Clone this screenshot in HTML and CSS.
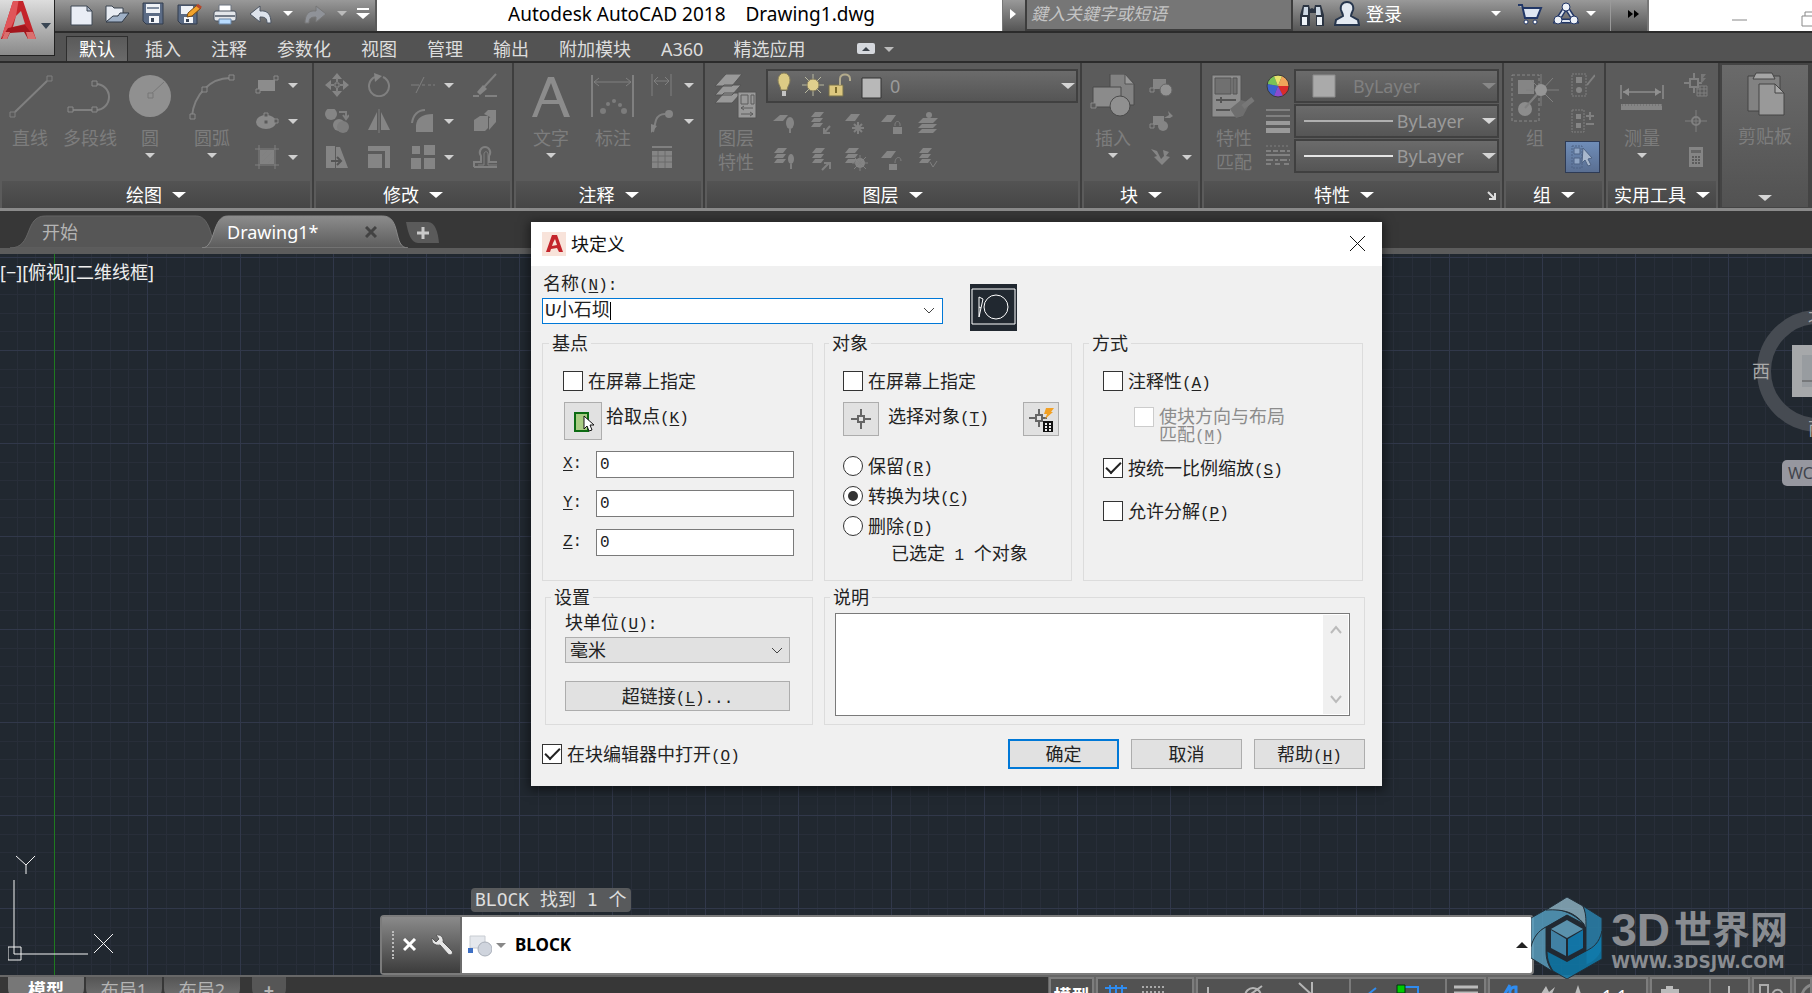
FILE: index.html
```html
<!DOCTYPE html>
<html lang="zh-CN">
<head>
<meta charset="utf-8">
<title>Autodesk AutoCAD 2018 Drawing1.dwg</title>
<link rel="stylesheet" href="styles.css">
</head>
<body>
<div class="app">
<header class="titlebar">
  <nav class="qat">
    <button class="tb" aria-label="新建"><svg width="26" height="24"><path d="M3 4h16l5 5v14H3z" fill="#e9edf5" stroke="#3f4855"/><path d="M19 4v5h5z" fill="#a9b4c6" stroke="#3f4855"/></svg></button>
    <button class="tb" aria-label="打开"><svg width="26" height="24"><path d="M2 19V4h6l2 2h9v5" fill="#e8ecf3" stroke="#39424f"/><path d="M2 20l7-6h5l2-3h9l-7 9z" fill="#9fb0c6" stroke="#2f3947"/></svg></button>
    <button class="tb" aria-label="保存"><svg width="26" height="24"><path d="M3 1h20v21H6l-3-3z" fill="#5b6b85" stroke="#333c4c"/><path d="M6 2h14v9H6z" fill="#eef1f6"/><path d="M7 6h12" stroke="#7f8c9f" stroke-width="2"/><path d="M9 14h10v7H9z" fill="#f4f6fa"/><path d="M11 16h3v4h-3z" fill="#3b4658"/></svg></button>
    <button class="tb" aria-label="另存为"><svg width="26" height="24"><path d="M2 3h19v19H5l-3-3z" fill="#5b6b85" stroke="#333c4c"/><path d="M5 4h12v8H5z" fill="#eef1f6"/><path d="M8 15h9v6H8z" fill="#f4f6fa"/><path d="M10 17h3v3h-3z" fill="#3b4658"/><path d="M11 15l1-4 9-8 4 3-9 8z" fill="#f2a32b" stroke="#7a4a13"/><path d="M21 3l4 3" stroke="#b5472c" stroke-width="3"/></svg></button>
    <button class="tb" aria-label="打印"><svg width="26" height="24"><path d="M7 3h12v7H7z" fill="#fff" stroke="#6c7480"/><rect x="2" y="9" width="22" height="10" rx="2" fill="#e3e6ea" stroke="#4b535f"/><path d="M3 14h20" stroke="#737b87" stroke-width="2"/><path d="M7 17h12v5H7z" fill="#b9dcff" stroke="#6b87a8"/></svg></button>
    <button class="tb" aria-label="放弃"><svg width="26" height="24"><path d="M2 12L12 4v5c8-1 11 4 11 12h-4c0-5-2-6-7-6v5z" fill="#dde3ec" stroke="#4c5562"/></svg></button>
    <button class="mini" aria-label="放弃选项"><i class="tri white"></i></button>
    <button class="tb" aria-label="重做"><svg width="26" height="24"><path d="M24 12L14 4v5C6 8 3 13 3 21h4c0-5 2-6 7-6v5z" fill="#8f9298" stroke="#777"/></svg></button>
    <button class="mini" aria-label="重做选项"><i class="tri pale"></i></button>
    <button class="mini custom" aria-label="自定义"><b></b><i class="tri white big"></i></button>
  </nav>
  <h1 class="apptitle"><span>Autodesk AutoCAD 2018</span><span>Drawing1.dwg</span></h1>
  <button class="expand" aria-label="展开"><i class="tri-r"></i></button>
  <input class="search" type="text" aria-label="搜索" placeholder="鍵入关鍵字或短语">
  <nav class="account">
    <button class="tb" aria-label="搜索"><svg width="26" height="26"><path d="M4 4h6l1 4 2-1 2 1 1-4h6l3 10v11h-8V12h-2-4v13H1V14z" fill="#2b3442"/><path d="M5 6h4v8H4zM17 6h4l1 8h-5z" fill="#cdd8e4"/><path d="M3 16h5v8H3zM18 16h5v8h-5z" fill="#eef3f8"/></svg></button>
    <button class="login"><svg width="26" height="26"><path d="M13 1c5 0 7 4 6 8-1 3-2 4-2 6l7 4 1 5H1l1-5 7-4c0-2-1-3-2-6-1-4 1-8 6-8z" fill="#e4eaf2" stroke="#27364d" stroke-width="2"/></svg>登录</button>
    <span class="grow"></span>
    <i class="tri white"></i>
    <button class="tb cart" aria-label="商店"><svg width="26" height="24"><path d="M1 3h4l3 13h12l4-10H6" fill="#dfe6f1" stroke="#223766" stroke-width="2"/><circle cx="9" cy="20" r="2" fill="#fff" stroke="#223766"/><circle cx="18" cy="20" r="2" fill="#fff" stroke="#223766"/></svg></button>
    <button class="tb" aria-label="Autodesk 网络"><svg width="26" height="24"><path d="M13 5L4 19h18z" fill="none" stroke="#233766" stroke-width="5"/><path d="M13 5L4 19h18z" fill="none" stroke="#dfe6f1" stroke-width="2"/><g fill="#eef2f8" stroke="#233766"><circle cx="13" cy="5" r="4"/><circle cx="5" cy="18" r="4"/><circle cx="21" cy="18" r="4"/></g></svg></button>
    <i class="tri white"></i>
    <button class="more" aria-label="更多"><svg width="12" height="10"><path d="M1 1l5 4-5 4zM7 1l5 4-5 4z" fill="#000"/></svg></button>
  </nav>
  <div class="winctl">
    <button aria-label="最小化"><svg width="16" height="14"><path d="M0 8h15" stroke="#888"/></svg></button>
    <button aria-label="还原"><svg width="16" height="16"><path d="M1 5h12v10H1zM4 5V1h12" fill="none" stroke="#888"/></svg></button>
  </div>
</header>

<button class="appmenu" aria-label="应用程序菜单"><svg width="54" height="54" viewBox="0 0 54 54"><path d="M1 38L14-3h8l14 41h-8l-2-9-17 1-2 8z" fill="#c4242b"/><path d="M14-3h5l-3 18-6 14-9 9z" fill="#e0555a"/><path d="M16 15l5-5 4 13-12 3z" fill="#b4b4b4"/><path d="M1 38l7-11 17-3 11 14h-8l-4-7-14 1-3 6z" fill="#a3161d"/><path d="M2 38l3-7h5l-3 7zM28 38l-2-7h7l3 7z" fill="#d9706f"/><path d="M41 22h10l-5 6z" fill="#3a4654"/></svg></button>

<nav class="rtabs">
  <button class="on">默认</button><button>插入</button><button>注释</button><button>参数化</button><button>视图</button><button>管理</button><button>输出</button><button>附加模块</button><button>A360</button><button>精选应用</button>
  <button class="minrib" aria-label="最小化功能区"><svg width="22" height="14"><rect x="1" y="1" width="18" height="11" rx="2" fill="#d5d8dd"/><path d="M6 9h8l-4-4z" fill="#3d434b"/></svg><i class="tri pale"></i></button>
</nav>

<section class="ribbon">
  <div class="panel p-draw">
    <div class="tools">
      <button class="bigb"><svg width="46" height="46"><path d="M3 38h5v5H3zM40 2h5v5h-5z" class="s1"/><path d="M8 38l32-31" class="s2"/></svg>直线</button>
      <button class="bigb"><svg width="46" height="46"><path d="M3 36h26a13 13 0 0 0 0-26" class="s2"/><g class="node"><path d="M1 33h5v5H1zM25 33h5v5h-5zM25 7h5v5h-5z"/></g></svg>多段线</button>
      <button class="bigb"><svg width="46" height="46"><circle cx="23" cy="22" r="21" fill="#909090"/><path d="M23 21L37 8" class="s1 dk"/><path d="M21 19h5v5h-5z" fill="#909090" stroke="#777"/></svg>圆<i class="tri"></i></button>
      <button class="bigb wide"><svg width="46" height="46"><path d="M3 42C5 22 20 3 43 4" class="s2"/><g class="node"><path d="M1 40h5v5H1zM13 13h5v5h-5zM40 1h5v5h-5z"/></g></svg>圆弧<i class="tri"></i></button>
      <div class="smalls drawcols">
        <button><svg class="ic"><path d="M3 7h17v11H3z" fill="#8c8c8c"/><path d="M1 16h4v4H1zM19 3h4v4h-4z" class="node1"/></svg></button><i class="tri"></i>
        <button><svg class="ic"><ellipse cx="11" cy="13" rx="10" ry="7" fill="#8a8a8a"/><path d="M9 4h4v4H9zM19 10h4v4h-4zM9 11h4v4H9z" class="node1"/></svg></button><i class="tri"></i>
        <button><svg class="ic"><path d="M5 5h14v14H5z" fill="#828282"/><path d="M4 0v24M20 0v24M0 4h24M0 20h24M7 17L17 7M7 11l5-5M13 18l6-6" class="s1"/></svg></button><i class="tri"></i>
      </div>
    </div>
    <button class="ptitle">绘图<i class="tri white big"></i></button>
  </div>

  <div class="panel p-mod">
    <div class="tools">
      <div class="smalls modcols">
        <button><svg class="ic"><path d="M12 0l5 6H7zM12 24l5-6H7zM0 12l6-5v10zM24 12l-6-5v10z" class="f"/><path d="M10 10h4v4h-4z" class="node1"/><path d="M12 5v4M12 15v4M5 12h4M15 12h4" class="s2"/></svg></button>
        <button><svg class="ic"><path d="M8 4a10 10 0 1 0 8 0" class="s2"/><path d="M7 0l8 3-7 6z" class="f"/></svg></button>
        <button><svg class="ic"><path d="M0 12h8M11 12h3M17 12h3M22 12h2M5 20L13 4" class="s1"/></svg></button><i class="tri"></i>
        <button><svg class="ic"><path d="M23 1L11 14" class="s2"/><path d="M10 12l4 4-7 6-3-3z" class="f"/><path d="M0 23h6M12 23h12" class="s2"/></svg></button>
        <button><svg class="ic"><circle cx="6" cy="5" r="6" class="f"/><circle cx="14" cy="16" r="6" class="f"/><circle cx="18" cy="18" r="6" fill="#7d7d7d"/><path d="M14 3h7v6M18 6l3 4 3-4" class="s2"/></svg></button>
        <button><svg class="ic"><path d="M10 3v18H1zM14 3v18h9z" class="f"/><path d="M12 0v24" class="s1"/></svg></button>
        <button><svg class="ic"><path d="M5 23V16C6 9 11 5 22 5v18z" class="f"/><path d="M1 14C2 6 7 1 14 1" class="s2"/></svg></button><i class="tri"></i>
        <button><svg class="ic"><path d="M1 11l6-4h8v12l-3 3H1zM11 5l4-4h8v4l-4 4zM16 9l7-4v8l-7 8z" class="f"/></svg></button>
        <button><svg class="ic"><path d="M1 1h9v22H1zM11 2h4l8 21H11z" class="f"/><path d="M6 16h9M12 12l4 4-4 4" class="s2 dk2"/></svg></button>
        <button><svg class="ic"><path d="M1 1h22v22h-5V6H1zM1 9h14v14H1z" class="f"/></svg></button>
        <button><svg class="ic"><path d="M1 1h8v8H1zM13 0h11v10H13zM0 13h10v11H0zM13 13h11v11H13z" class="f"/></svg></button><i class="tri"></i>
        <button><svg class="ic"><path d="M1 22v-5h7v-6c-3-4 0-9 4-9s7 5 4 9v6h8M1 22h23" class="s2"/><path d="M5 20h6V9c0-3 4-3 4 0v11h9" class="s1"/></svg></button>
      </div>
    </div>
    <button class="ptitle">修改<i class="tri white big"></i></button>
  </div>

  <div class="panel p-ann">
    <div class="tools">
      <button class="bigb"><svg width="46" height="46"><path d="M4 43L20 3h6l16 40h-6l-5-13H14L9 43zM16 26h13L23 9z" fill="#8c8c8c" fill-rule="evenodd"/></svg>文字<i class="tri"></i></button>
      <button class="bigb"><svg width="46" height="46"><path d="M2 1v42M43 1v42" class="s2"/><path d="M4 8h37M9 4L4 8l5 4M36 4l5 4-5 4" class="s1"/><g fill="#7c7c7c"><circle cx="13" cy="37" r="3"/><circle cx="18" cy="30" r="2"/><circle cx="24" cy="27" r="2"/><circle cx="30" cy="31" r="2"/><circle cx="34" cy="37" r="3"/></g></svg>标注</button>
      <div class="smalls anncols">
        <button><svg class="ic"><path d="M1 1v22M20 1v22M3 8h15M7 4L3 8l4 4M14 4l4 4-4 4" class="s1"/></svg></button><i class="tri"></i>
        <button><svg class="ic"><path d="M2 23l3-12c2-5 5-6 9-6" class="s2"/><circle cx="18" cy="5" r="4" class="f"/><path d="M0 24V15l6 2z" class="f"/></svg></button><i class="tri"></i>
        <button><svg class="ic"><path d="M1 2h20" class="s2"/><path d="M1 6h20v17H1z" class="f"/><path d="M7 6v17M14 6v17M1 11h20M1 17h20" stroke="#6a6a6a"/></svg></button><span></span>
      </div>
    </div>
    <button class="ptitle">注释<i class="tri white big"></i></button>
  </div>

  <div class="panel p-lay">
    <div class="tools">
      <button class="bigb"><svg width="46" height="46"><g fill="#999" stroke="#555"><path d="M2 29l9-10h17l-9 10zM2 21l9-10h17l-9 10zM2 12L13 0h16L19 12z"/><path d="M25 18h18v26H25z"/></g><path d="M28 21h7v9h-7zM38 21h3v9h-3zM28 34h12M28 40h12M31 32l-3 2 3 2M37 38l3 2-3 2" fill="none" stroke="#5d5d5d"/></svg>图层<br>特性</button>
      <div class="stack">
        <button class="combo laycombo" aria-label="图层">
          <svg width="106" height="28"><path d="M2 8a6 7 0 1 1 12 0c0 4-2 5-3 10H5c-1-5-3-6-3-10z" fill="#dccb85" stroke="#89805a"/><path d="M6 19h4v5H6z" fill="#c4c4c4"/><path d="M37 2v22M26 13h22M29 5l16 16M45 5L29 21" stroke="#b9b9a0"/><circle cx="37" cy="13" r="6" fill="#e0cf8d" stroke="#857d5f"/><path d="M53 13h14v11H53z" fill="#dcc77e" stroke="#77704c"/><path d="M64 13V7c0-6 10-6 10 0v2" fill="none" stroke="#b3ab8c" stroke-width="2"/><path d="M60 15v6" stroke="#7b6b2e" stroke-width="2"/><path d="M86 6h19v20H86z" fill="#b8b8b8" stroke="#333"/></svg>0<span class="grow"></span><i class="tri big pale2"></i>
        </button>
        <div class="smalls laycols">
          <button><svg class="ic"><path d="M0 10l7-6h8l-5 6z" class="f"/><ellipse cx="17" cy="12" rx="4" ry="6" class="f"/><path d="M17 17v5" class="s2"/></svg></button>
          <button><svg class="ic"><path d="M2 6l4-5h9l-4 5zM2 11l3-4h9l-3 4zM2 16l3-4h9l-3 4z" class="f"/><path d="M21 15l-6 7M15 17v5h6" class="s2"/></svg></button>
          <button><svg class="ic"><path d="M0 10l6-7h9l-5 7z" class="f"/><path d="M13 11v12M7 17h12M9 13l8 8M17 13l-8 8" class="s2"/></svg></button>
          <button><svg class="ic"><path d="M0 11l6-7h9l-5 7z" class="f"/><path d="M12 16h9v7h-9z" class="f"/><path d="M14 15c-1-6 6-6 5 0" class="s1"/></svg></button>
          <button><svg class="ic"><path d="M1 12l5-5h15l-5 5zM1 17l4-4h15l-4 4zM1 22l4-4h15l-4 4z" class="f"/><circle cx="12" cy="4" r="3" class="f"/></svg></button>
          <button><svg class="ic"><path d="M1 6l4-5h9l-4 5zM1 11l3-4h9l-3 4zM1 16l3-4h9l-3 4z" class="f"/><ellipse cx="18" cy="12" rx="3" ry="5" class="f"/><path d="M18 17v5" class="s2"/></svg></button>
          <button><svg class="ic"><path d="M3 6l4-5h9l-4 5zM3 11l3-4h9l-3 4zM3 16l3-4h9l-3 4z" class="f"/><path d="M13 23l7-7M15 16h6v6" class="s2"/></svg></button>
          <button><svg class="ic"><path d="M0 6l4-5h10l-4 5zM0 11l3-4h10l-3 4zM0 16l3-4h9l-3 4z" class="f"/><circle cx="15" cy="16" r="5" class="f"/><path d="M15 8v16M7 16h16M9 10l12 12M21 10L9 22" class="s1"/></svg></button>
          <button><svg class="ic"><path d="M0 11l6-7h9l-5 7z" class="f"/><path d="M8 17h8v6H8z" class="f"/><path d="M14 16c0-7 6-7 6-2" class="s1"/></svg></button>
          <button><svg class="ic"><path d="M2 6l4-5h9l-4 5zM2 11l3-4h9l-3 4zM2 16l3-4h9l-3 4z" class="f"/><path d="M13 15l3 5 4-6" class="s1"/></svg></button>
        </div>
      </div>
    </div>
    <button class="ptitle">图层<i class="tri white big"></i></button>
  </div>

  <div class="panel p-blk">
    <div class="tools">
      <button class="bigb"><svg width="46" height="46"><path d="M20 0h15l9 10v21H20z" fill="#828282" stroke="#4b4b4b"/><path d="M35 0v10h9z" fill="#999" stroke="#555"/><path d="M3 13h28v20H3z" fill="#8b8b8b" stroke="#4b4b4b"/><circle cx="30" cy="32" r="10" fill="#909090" stroke="#4b4b4b"/><path d="M1 29h5v5H1z" class="node1"/></svg>插入<i class="tri"></i></button>
      <div class="smalls blkcols">
        <button><svg class="ic"><path d="M4 6h13v10H4z" class="f"/><circle cx="17" cy="17" r="6" fill="#939393" stroke="#666"/><path d="M1 15h4v4H1z" class="node1"/></svg></button><span></span>
        <button><svg class="ic"><path d="M4 7h11v9H4z" class="f"/><circle cx="14" cy="17" r="5" class="f"/><path d="M15 9l5-3-1-4 5 5-3 2z" class="f"/><path d="M1 15h4v4H1z" class="node1"/></svg></button><span></span>
        <button><svg class="ic"><path d="M2 4l6 2 4 8 3-3-1-6 6 2-3 4 4 1-8 8-8-8 3-1z" class="f"/></svg></button><i class="tri"></i>
      </div>
    </div>
    <button class="ptitle">块<i class="tri white big"></i></button>
  </div>

  <div class="panel p-prop">
    <div class="tools">
      <button class="bigb"><svg width="46" height="46"><path d="M1 1h29v42H1z" fill="#8d8d8d" stroke="#555"/><path d="M4 4h16v16H4zM22 4h4v16h-4z" fill="#707070" stroke="#555"/><path d="M5 26h20M10 23v6M5 36h14" stroke="#555" stroke-width="2"/><path d="M19 35l11-9 9 3-7 13-7 2z" fill="#6e6e6e"/><path d="M32 33l10-8" stroke="#777" stroke-width="5"/></svg>特性<br>匹配</button>
      <div class="propgrid">
        <svg class="ic"><g><path d="M12 12L1 10A11 11 0 0 1 8 2z" fill="#79c257"/><path d="M12 12L8 2a11 11 0 0 1 8 0z" fill="#e7e36b"/><path d="M12 12l4-10a11 11 0 0 1 7 10z" fill="#efa55a"/><path d="M12 12h11a11 11 0 0 1-6 10z" fill="#d92b2b"/><path d="M12 12l5 10a11 11 0 0 1-9 0z" fill="#8b4bd0"/><path d="M12 12L8 22A11 11 0 0 1 1 10z" fill="#3c62cf"/></g><circle cx="12" cy="12" r="11" fill="none" stroke="#3a3a3a"/></svg>
        <button class="combo dim"><svg width="32" height="28"><path d="M5 3h22v22H5z" fill="#aaa" stroke="#8c8c8c"/></svg><span class="by">ByLayer</span><span class="grow"></span><i class="tri big dimt"></i></button>
        <svg class="ic"><path d="M0 1h24M0 7h24" class="s2"/><path d="M0 12h24v4H0zM0 19h24v5H0z" fill="#9a9a9a"/></svg>
        <button class="combo"><span class="rule"></span>ByLayer<i class="tri big pale2"></i></button>
        <svg class="ic"><path d="M0 2h24" class="s1" stroke-dasharray="2 2"/><path d="M0 7h24" class="s2" stroke-dasharray="5 2"/><path d="M0 11h24" class="s2"/><path d="M0 16h24" class="s2" stroke-dasharray="7 2 3 2"/><path d="M0 20h24" class="s2" stroke-dasharray="5 4"/></svg>
        <button class="combo"><span class="rule lite"></span>ByLayer<i class="tri big pale2"></i></button>
      </div>
    </div>
    <button class="ptitle">特性<i class="tri white big"></i><svg class="launch" width="9" height="9"><path d="M1 1l7 7M8 2v6H2" fill="none" stroke="#ddd" stroke-width="2"/></svg></button>
  </div>

  <div class="panel p-grp">
    <div class="tools">
      <button class="bigb"><svg width="48" height="48"><path d="M1 1h27v46H1z" fill="none" stroke="#898989" stroke-dasharray="3 2"/><path d="M7 6h16v14H7z" class="f"/><circle cx="14" cy="35" r="7" fill="#8c8c8c"/><path d="M30 0v32M15 16h33M16 32L42 4M20 6l22 22" class="s1"/><path d="M14 34l14-16" class="s2"/><circle cx="30" cy="16" r="6" fill="#959595"/></svg>组</button>
      <div class="smalls one">
        <button><svg class="ic"><path d="M1 1h14v22H1z" class="s1" stroke-dasharray="2 1"/><path d="M5 4h6v6H5z" class="f"/><circle cx="8" cy="17" r="3" class="f"/><path d="M24 2l-8 10" class="s2"/></svg></button>
        <button><svg class="ic"><path d="M1 1h12v22H1z" class="s1" stroke-dasharray="2 1"/><path d="M5 5h5v5H5zM5 14h5v5H5z" class="f"/><path d="M19 3v8M15 7h8M15 15h8" class="s2"/></svg></button>
        <button class="sel"><svg class="ic"><path d="M1 1h10v22H1z" fill="none" stroke="#4e6384" stroke-dasharray="2 1"/><path d="M3 3h6v6H3zM3 13h6v6H3z" fill="#8fa5c4" stroke="#4e6384"/><path d="M12 3l9 10-4 1 3 6-3 1-3-6-3 3z" fill="#a9b8cd" stroke="#4e6384"/></svg></button>
      </div>
    </div>
    <button class="ptitle">组<i class="tri white big"></i></button>
  </div>

  <div class="panel p-util">
    <div class="tools">
      <button class="bigb"><svg width="46" height="46"><path d="M2 11v14M44 11v14" class="s2"/><path d="M4 18h38" class="s2"/><path d="M4 18l6-4v8zM42 18l-6-4v8z" fill="#909090"/><path d="M2 30h41v6H2z" fill="#858585"/><path d="M3 31h40" stroke="#666" stroke-dasharray="1 2"/></svg>测量<i class="tri"></i></button>
      <div class="smalls one">
        <button><svg class="ic"><path d="M10 0v6M10 14v6M0 10h6M14 10h4M6 6h8v8H6z" class="s2"/><path d="M17 1h5l-3 4h3l-5 6z" fill="#777"/><path d="M13 13h10v10H13zM16 13v10M20 13v10M13 16h10M13 20h10" class="s1"/></svg></button>
        <button><svg class="ic"><path d="M12 1v22M1 12h22" class="s1"/><circle cx="12" cy="12" r="4" class="s2"/></svg></button>
        <button><svg class="ic"><path d="M5 2h14v20H5z" class="f"/><path d="M7 5h10v3H7z" fill="#666"/><path d="M8 12h9M8 15h9M8 18h9" stroke="#5c5c5c" stroke-width="2" stroke-dasharray="2 1"/></svg></button>
      </div>
    </div>
    <button class="ptitle">实用工具<i class="tri white big"></i></button>
  </div>

  <div class="panel p-clip">
    <button class="clip"><svg width="46" height="46"><path d="M6 4h32v35H6z" fill="#828282" stroke="#454545"/><path d="M14 1h16l3 6H11z" fill="#a5a5a5" stroke="#454545"/><path d="M17 12h16l9 9v22H17z" fill="#999" stroke="#454545"/><path d="M33 12v9h9z" fill="#aaa" stroke="#454545"/></svg>剪贴板<span class="grow"></span><i class="tri big pale2"></i></button>
  </div>
</section>

<nav class="filetabs">
  <button class="ftab"><svg viewBox="0 0 210 34" preserveAspectRatio="none"><path d="M0 34C24 34 14 1 36 1H190C206 1 206 34 210 34z" fill="#565656" stroke="#666"/></svg><span>开始</span></button>
  <button class="ftab act"><svg viewBox="0 0 210 34" preserveAspectRatio="none"><path d="M0 34C14 34 10 1 26 1H184C204 1 194 34 210 34z" fill="url(#tabg)" stroke="#8a8a8a"/><defs><linearGradient id="tabg" x2="0" y2="1"><stop stop-color="#8c8c8c"/><stop offset="1" stop-color="#5c5c5c"/></linearGradient></defs></svg><span>Drawing1*</span><svg class="tabx" width="12" height="12"><path d="M1 1l10 10M11 1L1 11" stroke="#434343" stroke-width="3"/></svg></button>
  <button class="addtab" aria-label="新图形"><svg width="34" height="22"><path d="M0 0h22c7 0 10 10 11 21H12C5 21 2 11 0 0z" fill="#5a5a5a"/><path d="M11 11h12M17 5v12" stroke="#c9c9c9" stroke-width="3"/></svg></button>
</nav>

<main class="canvas">
  <svg class="grid" aria-hidden="true"><defs><pattern id="g" x="54" y="3" width="93" height="93" patternUnits="userSpaceOnUse"><path d="M19 0h1v93h-1zM37 0h1v93h-1zM56 0h1v93h-1zM74 0h1v93h-1zM0 19h93v1H0zM0 37h93v1H0zM0 56h93v1H0zM0 74h93v1H0z" fill="#282e39"/><path d="M0 0h1v93H0zM0 0h93v1H0z" fill="#31384a"/></pattern></defs><rect width="100%" height="100%" fill="url(#g)"/><path d="M54 0h1v2000h-1z" fill="#1f7a1f"/></svg>
  <div class="vplabel"><span>[−]</span><span>[俯视]</span><span>[二维线框]</span></div>
  <svg class="ucs" width="110" height="108" aria-hidden="true"><path d="M8 1l10 9v9M27 1l-9 9M86 79l19 19M105 79L86 98M6 25v74h74M0 92h13v13H0z" fill="none" stroke="#f4f4f4"/></svg>
  <div class="cube">
    <svg width="60" height="180" aria-hidden="true"><circle cx="66" cy="63" r="54" fill="none" stroke="#464b52" stroke-width="14"/><path d="M40 37h40v52H40z" fill="#a6a8aa"/><path d="M50 47h30v32H50z" fill="#989ca0"/><path d="M50 73h30" stroke="#555"/></svg>
    <span class="west">西</span><span class="north">北</span><span class="south">南</span>
    <button class="wcs">WCS</button>
  </div>
  <div class="cmd">
    <div class="hist">BLOCK 找到 1 个</div>
    <div class="cmdbar">
      <div class="grip"><i class="dots"></i>
        <button aria-label="关闭"><svg width="14" height="14"><path d="M1 1l11 11M12 1L1 12" stroke="#fff" stroke-width="3"/></svg></button>
        <button aria-label="自定义"><svg width="24" height="24"><path d="M2 5l4 4 3-3-3-4c5-1 8 3 7 7l9 9c2 3-2 5-4 3l-8-9C5 13 1 10 2 5z" fill="#e6e6e6" stroke="#555"/></svg></button>
      </div>
      <svg width="24" height="24"><path d="M2 3h15v12H2z" fill="#e5e8ed" stroke="#c8ccd2"/><circle cx="17" cy="16" r="7" fill="#cfd4dd" stroke="#a9afb9"/><path d="M0 15h5v5H0z" fill="#3d6fc4"/></svg>
      <i class="tri greyt"></i>
      <input type="text" value="BLOCK" aria-label="命令行"><i class="tri-u"></i>
    </div>
  </div>
</main>

<footer class="status">
  <nav class="ltabs"><button class="on">模型</button><button>布局1</button><button>布局2</button><button class="plus">+</button></nav>
  <div class="sgroups">
    <button class="g1">模型</button>
    <div class="g2"><svg width="96" height="20"><path d="M12 6v14M18 6v14M24 6v14M7 9h22M7 15h22" stroke="#2f8cf0" stroke-width="2"/><path d="M44 8h22M44 13h22M44 18h22" stroke="#aaa" stroke-width="2" stroke-dasharray="2 2"/></svg></div>
    <div class="g3"><svg width="286" height="20"><path d="M10 8v12M47 18c0-12 16-12 16 0M46 20L64 7M101 4l13 12M114 3v17" fill="none" stroke="#b5b5b5" stroke-width="2"/><path d="M152 0v20M248 0v20" stroke="#7a7a7a" stroke-width="2"/><path d="M168 17l10-8M204 8h16v10" fill="none" stroke="#2f8cf0" stroke-width="2"/><path d="M199 6h8v8h-8z" fill="#0c0" stroke="#031"/><path d="M256 8h24M256 14h24" stroke="#bbb" stroke-width="3"/></svg></div>
    <div class="g4"><svg width="154" height="20"><path d="M13 18l7-12M24 18a5 5 0 1 1 2-10v10" fill="none" stroke="#2f8cf0" stroke-width="3"/><path d="M49 18l7-11 3 6 6-5-3 7 5 3M84 18l4-12 4 12" fill="#bbb"/></svg><span>1:1</span></div>
    <div class="g5"><svg width="98" height="20"><path d="M10 11h5V8h5v3h6v7H10zM77 7v12" fill="#bbb" stroke="#bbb" stroke-width="2"/><path d="M58 0v20" stroke="#7a7a7a" stroke-width="2"/></svg></div>
    <div class="g6"><svg width="40" height="20"><path d="M6 6h8v13H6zM19 18a5 5 0 1 1 9 0" fill="none" stroke="#aaa" stroke-width="2"/></svg></div>
    <div class="g7"><svg width="20" height="20"><path d="M6 17a12 12 0 0 1 14-11" fill="none" stroke="#888" stroke-width="3"/></svg></div>
  </div>
</footer>

<div class="mark" aria-hidden="true">
  <svg width="72" height="82" viewBox="0 0 72 82"><g stroke="#23303a" stroke-width="1" fill-opacity=".85"><path d="M0 21l16-9c16 0 26 4 37 15L36 18 15 30C8 34 3 40 0 50z" fill="#57a2c5"/><path d="M15 13L36 0l16 9c4 8 5 18 3 28L53 27C43 15 33 12 15 13z" fill="#8fb5c5"/><path d="M52 9l19 12v31c-2 7-8 13-16 16V30c0-8 0-14-3-21z" fill="#2a86b3"/><path d="M71 52v10L36 82 22 74c-5-8-6-13-6-22l20 12 19-10c8-4 13-8 16-20z" fill="#0d7fb3"/><path d="M0 61V50c2-9 7-16 15-20v24c0 8 2 14 6 20z" fill="#5da3c4"/></g><path d="M15 30l21-12 19 12v24L36 65 15 54z" fill="#222a33"/><path d="M20 32l16-9 16 9-16 9z" fill="#5e97b3"/><path d="M20 33l15 9v17l-15-8z" fill="#4386ab"/><path d="M37 42l15-9v18l-15 8z" fill="#1279ac"/></svg>
  <div><p class="m1"><span>3D</span>世界网</p><p class="m2">WWW.3DSJW.COM</p></div>
</div>

<section class="dialog" role="dialog" aria-labelledby="dt">
  <header class="dhead"><svg width="24" height="24"><path d="M0 0h24v24H0z" fill="#f8e3da"/><path d="M4 20L10 3h5l6 17h-4l-2-4-6 1-1 3z" fill="#c4242b"/><path d="M11 11l2-4 2 6-5 1z" fill="#f8e3da"/></svg><h2 id="dt">块定义</h2><button class="dclose" aria-label="关闭"><svg width="16" height="16"><path d="M0 0l15 15M15 0L0 15" stroke="#111"/></svg></button></header>
  <form class="dbody">
    <div class="namerow">
      <div class="namecol"><label for="nm">名称<span class="k">(<u>N</u>):</span></label>
        <div class="namebox"><input id="nm" type="text" value="U小石坝"><i class="cursor"></i><button type="button" aria-label="列表"><svg width="12" height="8"><path d="M1 1l5 5 5-5" fill="none" stroke="#444"/></svg></button></div></div>
      <svg class="preview" width="47" height="47"><path d="M0 0h47v47H0z" fill="#212830"/><g fill="none" stroke="#fff"><path d="M2 5h43v35H2z"/><circle cx="26" cy="23" r="12"/><path d="M9 33V13l4 2-2 9-2-1M11 24l-2 9"/></g></svg>
    </div>
    <div class="row1">
      <fieldset class="fs-base"><legend>基点</legend>
        <label class="chk"><input type="checkbox"><span>在屏幕上指定</span></label>
        <div class="pick"><button type="button" id="pk" class="sq big" aria-label="拾取点"><svg width="24" height="24"><path d="M4 4h13v18H4z" fill="#a9cd83" stroke="#0c6b12" stroke-width="2"/><path d="M13 7v13l3-3 2 5 3-1-2-5h4z" fill="#fff" stroke="#111"/></svg></button><label for="pk">拾取点<span class="k">(<u>K</u>)</span></label></div>
        <div class="xyz"><label for="x" class="k"><u>X</u>:</label><input id="x" type="text" value="0"><label for="y" class="k"><u>Y</u>:</label><input id="y" type="text" value="0"><label for="z" class="k"><u>Z</u>:</label><input id="z" type="text" value="0"></div>
      </fieldset>
      <fieldset class="fs-obj"><legend>对象</legend>
        <label class="chk"><input type="checkbox"><span>在屏幕上指定</span></label>
        <div class="pick"><button type="button" id="so" class="sq"><svg width="20" height="20"><path d="M10 0v6M10 14v6M0 10h6M14 10h6M7 7h6v6H7z" fill="none" stroke="#666" stroke-width="2"/></svg></button><label for="so">选择对象<span class="k">(<u>T</u>)</span></label><span class="grow"></span><button type="button" class="sq" aria-label="快速选择"><svg width="26" height="26"><path d="M11 3v6M11 15v6M1 12h6M15 12h4M8 9h6v6H8z" fill="none" stroke="#666" stroke-width="2"/><path d="M18 2h8l-3 4h2l-8 7 2-5h-3z" fill="#f2a023"/><path d="M15 15h10v11H15z" fill="#111"/><path d="M17 17h2v2h-2zM21 17h2v2h-2zM17 20h2v2h-2zM21 20h2v2h-2zM17 23h2v2h-2zM21 23h2v2h-2z" fill="#eee"/></svg></button></div>
        <div class="radios"><label class="chk"><input type="radio" name="o"><span>保留<span class="k">(<u>R</u>)</span></span></label><label class="chk"><input type="radio" name="o" checked><span>转换为块<span class="k">(<u>C</u>)</span></span></label><label class="chk"><input type="radio" name="o"><span>删除<span class="k">(<u>D</u>)</span></span></label></div>
        <p class="count">已选定<span class="k"> 1 </span>个对象</p>
      </fieldset>
      <fieldset class="fs-mode"><legend>方式</legend>
        <label class="chk"><input type="checkbox"><span>注释性<span class="k">(<u>A</u>)</span></span></label>
        <label class="chk sub"><input type="checkbox" disabled><span>使块方向与布局<br>匹配<span class="k">(<u>M</u>)</span></span></label>
        <label class="chk c3"><input type="checkbox" checked><span>按统一比例缩放<span class="k">(<u>S</u>)</span></span></label>
        <label class="chk c4"><input type="checkbox"><span>允许分解<span class="k">(<u>P</u>)</span></span></label>
      </fieldset>
    </div>
    <div class="row2">
      <fieldset class="fs-set"><legend>设置</legend>
        <label for="un">块单位<span class="k">(<u>U</u>):</span></label>
        <div class="selwrap"><select id="un"><option>毫米</option></select><svg width="12" height="8"><path d="M1 1l5 5 5-5" fill="none" stroke="#444"/></svg></div>
        <button type="button" class="btn link">超链接<span class="k">(<u>L</u>)...</span></button>
      </fieldset>
      <fieldset class="fs-desc"><legend>说明</legend>
        <div class="ta"><textarea aria-label="说明"></textarea><div class="sbar"><svg width="12" height="9"><path d="M1 8l5-6 5 6" fill="none" stroke="#bbb" stroke-width="2"/></svg><svg width="12" height="9"><path d="M1 1l5 6 5-6" fill="none" stroke="#bbb" stroke-width="2"/></svg></div></div>
      </fieldset>
    </div>
    <div class="dfoot"><label class="chk"><input type="checkbox" checked><span>在块编辑器中打开<span class="k">(<u>O</u>)</span></span></label><span class="grow"></span><button type="button" class="btn ok">确定</button><button type="button" class="btn">取消</button><button type="button" class="btn">帮助<span class="k">(<u>H</u>)</span></button></div>
  </form>
</section>
</div>
</body>
</html>
```
FILE: styles.css
```css
*{box-sizing:border-box;margin:0;padding:0}
html,body{height:100%;overflow:hidden}
body{font:18px/24px "Noto Sans","Noto Sans CJK SC",sans-serif;background:#212830;color:#ddd}
button{font:inherit;color:inherit;background:none;border:0;text-align:center}
input,select,textarea{font:inherit;color:inherit}
svg{display:block;flex:none}
i{display:block;flex:none}
.app{position:relative;height:100vh;display:flex;flex-direction:column;overflow:hidden}
.grow{flex:1}
.tri{width:0;height:0;border:5px solid transparent;border-top:5px solid #cfcfcf;border-bottom:0}
.tri.big{border-width:6px 7px 0}
.tri.white{border-top-color:#fff}
.tri.pale{border-top-color:#bbb}
.tri.pale2{border-top-color:#d5d5d5}
.tri.dimt{border-top-color:#888}
.tri.greyt{border-top-color:#888}
.tri-r{width:0;height:0;border:5px solid transparent;border-left:6px solid #fff;border-right:0}
.tri-u{width:0;height:0;border:6px solid transparent;border-bottom:6px solid #222;border-top:0}

/* title bar */
.titlebar{display:flex;flex:none;height:33px;background:#fff;border-bottom:2px solid #2b2b2b;overflow:hidden}
.qat,.account,.expand{background:linear-gradient(#999,#555);flex:none}
.qat{display:flex;align-items:center;width:377px;padding:0 0 4px 63px;border-right:2px solid #5a5a5a}
.qat .tb{width:36px;flex:none}
.qat .tb svg{margin:auto}
.qat .mini{width:18px;flex:none;display:flex;flex-direction:column;align-items:center;gap:3px}
.qat .custom{margin-left:3px}
.custom b{width:12px;height:2px;background:#fff}
.apptitle{flex:1;display:flex;gap:20px;padding-left:131px;font-size:19px;line-height:28px;font-weight:400;color:#000;white-space:nowrap}
.expand{width:23px;padding:0 0 4px 7px;border-left:1px solid #777}
.search{flex:none;width:268px;border:2px solid #3d3d3d;border-top:0;background:#767676;padding:0 2px 4px 4px;font-size:17px;font-style:italic;font-family:"Noto Sans CJK SC",sans-serif}
.search::placeholder{color:#c4c4c4;opacity:1}
.account{display:flex;align-items:center;width:356px;padding:0 0 4px 6px;border-right:2px solid #777}
.login{display:flex;align-items:center;gap:6px;color:#fff;margin-left:9px}
.cart{margin:0 10px 0 16px}
.account .tri:last-of-type{margin-left:7px}
.more{margin-left:14px;border-left:1px solid #999;padding:12px 8px 12px 16px}
.winctl{flex:none;width:163px;display:flex;gap:53px;padding:6px 0 0 83px}
.appmenu{position:absolute;left:0;top:0;width:55px;height:56px;background:linear-gradient(#ddd,#8a8a8a);border-right:1px solid #222;border-bottom:1px solid #222;overflow:hidden}

/* ribbon */
.rtabs{flex:none;display:flex;gap:6px;height:30px;padding:3px 0 0 67px;background:#535353;border-bottom:2px solid #2b2b2b}
.rtabs button{padding:0 12px;border:1px solid transparent;border-bottom:0;margin:0 -1px;line-height:22px;white-space:nowrap}
.rtabs .on{background:linear-gradient(#5a5a5a,#6a6a6a);border-color:#2e2e2e;color:#fff}
.rtabs .minrib{display:flex;align-items:center;gap:6px;margin-left:20px}

.ribbon{flex:none;display:flex;height:148px;background:#5b5b5b;border-bottom:3px solid #8a8a8a;color:#7d7d7d}
.panel{display:flex;flex-direction:column;border-right:2px solid #3e3e3e;min-width:0;overflow:hidden}
.tools{display:flex;flex:1;padding-top:4px}
.ptitle{position:relative;display:flex;align-items:center;justify-content:center;gap:10px;height:27px;margin:0 2px;background:linear-gradient(#535353,#464646);color:#fff}
.p-prop .ptitle{padding-right:16px}
.launch{position:absolute;right:4px;bottom:8px}
.bigb{width:60px;flex:none;padding-top:7px;display:flex;flex-direction:column;align-items:center;justify-content:flex-start;line-height:24px}
.bigb>svg{height:52px}
.bigb.wide{width:64px}
.bigb .tri{margin-top:3px}
.smalls{display:grid;grid-auto-rows:36px;align-items:center;align-content:start}
.ic{width:24px;height:24px}
.f{fill:#858585}
.s1{fill:none;stroke:#808080;stroke-width:1}
.s2{fill:none;stroke:#808080;stroke-width:2}
.dk{stroke:#787878}
.dk2{stroke:#555}
.node path,.node1{fill:#5b5b5b;stroke:#8a8a8a;stroke-width:1}
.p-draw{flex:314 1 314px}
.p-mod{flex:200 1 200px}
.p-ann{flex:191 1 191px}
.p-lay{flex:377 1 377px}
.p-blk{flex:120 1 120px}
.p-prop{flex:302 1 302px}
.p-grp{flex:102 1 102px}
.p-util{flex:114 1 114px}
.p-clip{flex:92 1 92px}
.drawcols{grid-template-columns:33px 10px;margin-left:11px}
.modcols{grid-template-columns:42px 44px 33px 29px 24px;margin-left:11px}
.p-ann .bigb{margin-left:6px;width:62px}
.p-ann .bigb+.bigb{margin-left:0}
.anncols{grid-template-columns:33px 10px;margin-left:7px}
.p-lay .bigb{width:60px;margin-left:1px}
.stack{flex:1;margin-right:2px;padding-top:2px}
.combo{width:100%;height:34px;display:flex;align-items:center;border:2px solid #404040;background:linear-gradient(#6b6b6b,#555);color:#9a9a9a;padding:0 1px 0 8px}
.laycombo{gap:8px}
.laycols{grid-template-columns:repeat(5,36px);padding:2px 0 0 7px}
.p-blk .bigb{width:62px}
.blkcols{grid-template-columns:33px 10px;margin-left:5px}
.p-prop .bigb{width:64px}
.propgrid{flex:1;display:grid;grid-template-columns:24px 1fr;column-gap:4px;row-gap:1px;align-content:start;align-items:center;padding-top:2px;margin-right:3px}
.combo.dim{color:#808080;padding-left:12px}
.by{margin-left:13px}
.rule{flex:1;height:2px;background:#b0b0b0;margin-right:4px}
.rule.lite{background:#e5e5e5}
.propgrid .combo .rule~.tri{margin-left:18px}
.p-grp .bigb{width:56px;margin-left:3px}
.one{margin-left:2px}
.one button{width:35px;height:32px;display:grid;place-items:center}
.one .sel{background:linear-gradient(#6f8db8,#5a6f92);border:1px solid #2e3b55}
.p-util .bigb{width:72px}
.p-util .one{margin-left:0}
.p-clip{border-right:0;background:#444;padding:2px 4px 1px 2px}
.clip{flex:1;display:flex;flex-direction:column;align-items:center;padding:7px 0 6px;background:linear-gradient(#6a6a6a,#525252)}
.clip svg{height:52px}

/* drawing tabs */
.filetabs{flex:none;display:flex;height:43px;padding:4px 0 0 10px;background:#373737;border-bottom:6px solid #5c5c5c}
.ftab{position:relative;width:206px;height:33px;text-align:left;padding:0 0 0 32px;color:#b4b4b4}
.ftab svg:first-child{position:absolute;inset:0;width:100%;height:100%}
.ftab span{position:relative;line-height:34px}
.ftab.act{margin-left:-14px;padding-left:25px;color:#fff;display:flex;align-items:center;gap:46px}
.tabx{position:relative}
.addtab{margin:7px 0 0 -2px;align-self:flex-start}

/* drawing area */
.canvas{position:relative;flex:1;min-height:0;background:#212830;overflow:hidden}
.grid{position:absolute;inset:0;width:100%;height:100%}
.vplabel{position:absolute;left:0;top:6px;color:#eee;white-space:nowrap}
.ucs{position:absolute;left:8px;bottom:12px}
.cube{position:absolute;right:0;top:54px;width:60px;height:180px;color:#aaa}
.cube svg{position:absolute;inset:0}
.cube span{position:absolute}
.west{left:0;top:51px}
.north{left:56px;top:-4px}
.south{left:56px;top:108px}
.wcs{position:absolute;left:30px;top:152px;width:60px;height:26px;border-radius:5px;background:#96979f;color:#41444d;text-align:left;padding-left:6px;font-size:16px}
.cmd{position:absolute;left:380px;right:278px;bottom:0;display:flex;flex-direction:column;align-items:flex-start;gap:3px}
.hist{margin-left:91px;padding:0 4px;border-radius:4px;background:#585a5c;color:#dedede;font-family:"DejaVu Sans Mono","Noto Sans CJK SC",monospace;white-space:nowrap}
.cmdbar{width:100%;height:60px;display:flex;align-items:center;border:2px solid #7b7b7b;border-radius:4px;background:#fff}
.grip{align-self:stretch;width:80px;display:flex;align-items:center;gap:13px;padding-left:10px;background:linear-gradient(#8a8a8a,#3c3c3c);border-right:2px solid #6b6b6b;margin-right:6px}
.dots{height:28px;border-left:2px dotted #bbb;margin-right:-4px}
.cmdbar>.tri{margin:0 9px 0 4px}
.cmdbar input{flex:1;border:0;outline:0;color:#000;font-size:17px;font-weight:700}
.cmdbar .tri-u{margin-right:4px}

/* status bar */
.status{flex:none;display:flex;height:18px;border-top:2px solid #676767;background:#373737;overflow:hidden}
.ltabs{display:flex;align-items:flex-start;flex:1;padding-left:8px;color:#b4b4b4}
.ltabs button{height:25px;background:linear-gradient(#555,#777);border-radius:0 0 14px 14px;margin-right:2px;width:76px;white-space:nowrap;line-height:24px}
.ltabs button.on{color:#fff;font-weight:700;background:#777}
.ltabs .plus{width:34px;margin-left:10px;background:#565656;font-weight:700}
.sgroups{display:flex;gap:2px;background:#666;padding-left:1px;height:36px}
.sgroups>*{flex:none;background:#525252;border:2px solid #7d7d7d;border-bottom:0;overflow:hidden}
.g1{width:45px;color:#fff;font-weight:700;white-space:nowrap}
.g2{width:98px}
.g3{width:290px}
.g4{width:160px;display:flex;color:#fff}
.g4 svg{width:112px}
.g4 span{line-height:34px}
.g5{width:100px}
.g6{width:40px}
.g7{width:18px}

/* site mark */
.mark{position:absolute;right:24px;bottom:14px;display:flex;gap:8px;color:#8f9297;opacity:.95}
.mark .m1{font:bold 38px/40px "Liberation Sans","Noto Sans CJK SC",sans-serif;white-space:nowrap;margin-top:13px;display:flex}
.mark .m1 span{font-size:46px;margin-right:4px}
.mark .m2{font:bold 17px/20px "DejaVu Sans",sans-serif;margin-top:2px}

/* block definition dialog */
.dialog{position:absolute;left:calc(50% - 375px);top:222px;width:851px;background:#f0f0f0;color:#111;box-shadow:0 2px 10px 2px rgba(0,0,0,.5)}
.dhead{display:flex;align-items:center;gap:5px;height:44px;padding:0 16px 0 11px;background:#fff}
.dhead h2{flex:1;font-size:18px;font-weight:400}
.dbody{padding:8px 17px 17px 11px;color:#222}
.k{font-family:"Liberation Mono",monospace;font-size:16px;line-height:15px}
.k u{text-underline-offset:2px}
.dbody .grow{flex:1}
.namerow{display:flex;gap:27px;height:59px}
.namecol{width:401px}
.namecol>label{display:block;height:22px;line-height:18px;margin:0 0 2px 1px}
.namebox{position:relative;display:flex;align-items:center;height:26px;border:1px solid #0078d7;background:#fff;padding-right:7px}
.namebox input{flex:1;border:0;outline:0;padding:0 0 1px 2px;background:none;height:24px;font-family:"Liberation Mono","Noto Sans CJK SC",monospace}
.cursor{position:absolute;left:67px;top:3px;width:1px;height:18px;background:#000}
.preview{margin-top:10px}
fieldset{border:1px solid #dcdcdc;min-width:0}
legend{line-height:20px;padding:0 3px;margin-left:-14px}
.fs-desc legend{margin-left:-5px}
.chk{display:flex;align-items:center;gap:5px;height:20px;line-height:20px;white-space:nowrap}
input[type=checkbox],input[type=radio]{appearance:none;flex:none;width:20px;height:20px;border:1px solid #333;background:#fff;display:grid;place-items:center}
input[type=radio]{border-radius:50%}
input[type=radio]:checked::before{content:"";width:10px;height:10px;border-radius:50%;background:#333}
input[type=checkbox]:checked::before{content:"";width:13px;height:6px;border:solid #222;border-width:0 0 2px 2px;rotate:-45deg;margin-bottom:4px}
input:disabled{border-color:#ccc}
.row1{display:flex;gap:11px;height:248px;margin-right:2px}
.fs-base{width:271px;padding:18px 18px 0 20px}
.fs-obj{width:248px;padding:18px 12px 0 18px}
.fs-mode{flex:1;padding:18px 0 0 19px}
.pick{display:flex;align-items:flex-start;margin-top:11px;line-height:28px}
.sq{width:36px;height:34px;border:1px solid #adadad;background:#e1e1e1;display:grid;place-items:center;margin-right:9px}
.sq:last-child{margin-right:0}
.sq.big{width:38px;height:38px;margin-left:1px;margin-right:4px}
.xyz{display:grid;grid-template-columns:33px 1fr;row-gap:12px;margin-top:11px;align-items:center}
.xyz input{height:27px;min-width:0;border:1px solid #7a7a7a;background:#fff;padding:0 3px;font:16px "Liberation Mono",monospace}
.radios{display:grid;gap:10px;margin-top:20px}
.count{margin:7px 0 0 48px;line-height:20px;white-space:nowrap}
.count .k{white-space:pre}
.chk.sub{height:36px;margin:16px 0 0 31px;align-items:flex-start;color:#8c8c8c;line-height:18px}
.c3{margin-top:15px}
.c4{margin-top:23px}
.row2{display:flex;gap:11px;height:138px;margin:6px 0 0 3px}
.fs-set{width:268px;padding:3px 22px 0 19px}
.fs-set>label{display:block;height:24px}
.selwrap{position:relative;margin-top:3px}
.selwrap svg{position:absolute;right:7px;top:10px;pointer-events:none}
select{display:block;appearance:none;width:100%;height:26px;border:1px solid #adadad;background:#e1e1e1;padding:0 4px;line-height:22px;border-radius:0}
.btn{width:111px;height:30px;border:1px solid #adadad;background:#e1e1e1;line-height:26px;white-space:nowrap}
.btn.link{display:block;width:100%;margin-top:18px}
.btn.ok{border:2px solid #0078d7}
.fs-desc{flex:1;padding:6px 14px 0 10px}
.ta{position:relative;height:103px}
textarea{display:block;width:100%;height:100%;resize:none;border:1px solid #7a7a7a;background:#fff}
.sbar{position:absolute;right:2px;top:2px;bottom:2px;width:25px;background:#f0f0f0;display:flex;flex-direction:column;justify-content:space-between;align-items:center;padding:10px 0}
.dfoot{display:flex;align-items:center;gap:12px;margin-top:14px}
```
